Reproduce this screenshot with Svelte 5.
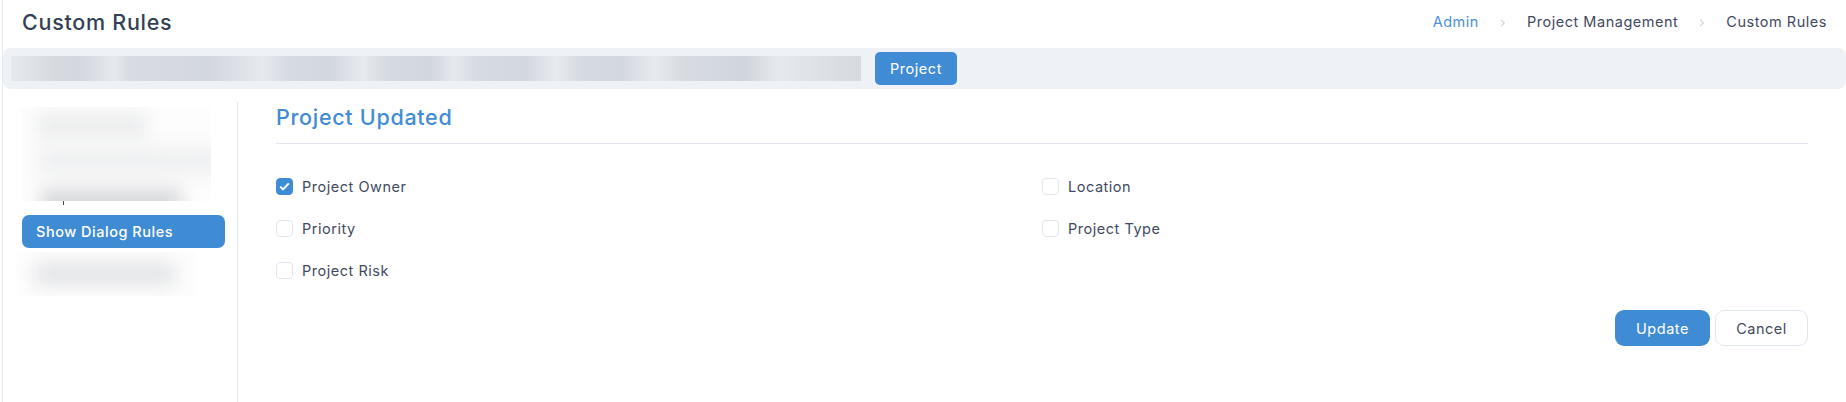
<script>
  let left = [
    { label: 'Project Owner', checked: true },
    { label: 'Priority', checked: false },
    { label: 'Project Risk', checked: false }
  ];
  let right = [
    { label: 'Location', checked: false },
    { label: 'Project Type', checked: false }
  ];
</script>

{#snippet option(item)}
  <label class="option">
    <span class="box" class:checked={item.checked}>
      {#if item.checked}
        <svg width="11" height="9" viewBox="0 0 11 9" fill="none">
          <path d="M1.2 4.6 4 7.4 9.8 1.4" stroke="#fff" stroke-width="2"/>
        </svg>
      {/if}
    </span>
    {item.label}
  </label>
{/snippet}

<div class="page">
  <header class="top">
    <h1>Custom Rules</h1>
    <nav class="crumbs">
      <a href="#admin">Admin</a>
      <svg class="chev" width="6" height="8" viewBox="0 0 6 8" fill="none"><path d="M1 .8 4.4 4 1 7.2" stroke="#b4bfd0"/></svg>
      <span>Project Management</span>
      <svg class="chev" width="6" height="8" viewBox="0 0 6 8" fill="none"><path d="M1 .8 4.4 4 1 7.2" stroke="#b4bfd0"/></svg>
      <span>Custom Rules</span>
    </nav>
  </header>

  <div class="bar">
    <div class="strip"></div>
    <button class="primary project">Project</button>
  </div>

  <div class="body">
    <aside class="side">
      <div class="smudge side-a">
        <i class="line a1"></i>
        <i class="line a2"></i>
        <i class="line a3"></i>
      </div>
      <span class="tick"></span>
      <button class="primary dialog">Show Dialog Rules</button>
      <div class="smudge side-b">
        <i class="line b1"></i>
      </div>
    </aside>

    <main class="content">
      <h2>Project Updated</h2>
      <div class="options">
        <div class="col">
          {#each left as item}
            {@render option(item)}
          {/each}
        </div>
        <div class="col">
          {#each right as item}
            {@render option(item)}
          {/each}
        </div>
      </div>
      <div class="actions">
        <button class="primary update">Update</button>
        <button class="cancel">Cancel</button>
      </div>
    </main>
  </div>
</div>

<style>
  :global(body) {
    margin: 0;
    background: #fff;
  }

  .page {
    height: 402px;
    box-sizing: border-box;
    overflow: hidden;
    margin-left: 2px;
    border-left: 1px solid #e4eaf3;
    font-family: Inter, "Liberation Sans", sans-serif;
    font-size: 14.5px;
    color: #3f4a5f;
    letter-spacing: 0.52px;
  }

  .top {
    display: flex;
    justify-content: space-between;
    align-items: center;
    height: 48px;
    padding: 0 19px 4px 19px;
    box-sizing: border-box;
  }

  h1 {
    margin: 0;
    font-size: 21.5px;
    font-weight: 500;
    color: #333f54;
    letter-spacing: 0.72px;
  }

  .crumbs {
    display: flex;
    align-items: center;
    gap: 21px;
    margin-top: -2px;
  }

  .crumbs a {
    color: #4a8fd8;
    text-decoration: none;
  }

  .chev {
    margin-top: 3px;
  }

  .bar {
    display: flex;
    align-items: center;
    gap: 14px;
    height: 41px;
    padding-left: 8px;
    background: #eef1f6;
    border-radius: 8px;
  }

  .strip {
    width: 850px;
    height: 25px;
    background: linear-gradient(90deg,
      #e6e9ee 0, #d6dae0 45px, #d3d7de 70px, #e6e9ee 103px,
      #d8dce2 118px, #d3d7de 200px, #e6e9ee 253px,
      #d6dae1 277px, #d3d7de 320px, #e7eaef 352px,
      #d6dae1 375px, #d2d6dd 420px, #e6e9ee 443px,
      #d6dae1 466px, #d3d7de 514px, #e7eaef 545px,
      #d6dae1 570px, #d3d7de 610px, #e7eaef 644px,
      #d8dce2 671px, #d0d5dc 735px, #e6e9ee 766px,
      #dde0e5 810px, #d6dae0 850px);
  }

  .primary {
    background: #3f8cd4;
    color: #fff;
    border: 0;
    font: inherit;
    letter-spacing: inherit;
  }

  .project {
    width: 82px;
    height: 33px;
    padding: 0;
    border-radius: 5px;
  }

  .body {
    display: flex;
    height: 313px;
  }

  .side {
    position: relative;
    flex-shrink: 0;
    box-sizing: border-box;
    width: 235px;
    margin-top: 13px;
    padding: 5px 0 0 18px;
    border-right: 1px solid #e4e8ef;
  }

  .smudge {
    position: relative;
    overflow: hidden;
  }

  .line {
    position: absolute;
    filter: blur(9px);
  }

  .side-a {
    width: 190px;
    height: 94px;
    background: #fdfdfd;
  }

  .a1 {
    left: 16px;
    top: 6px;
    width: 110px;
    height: 26px;
    background: #ecedee;
  }

  .a2 {
    left: 16px;
    top: 40px;
    width: 190px;
    height: 28px;
    background: #eff0f1;
  }

  .a3 {
    left: 20px;
    top: 82px;
    width: 140px;
    height: 24px;
    background: #d6d7db;
  }

  .tick {
    position: absolute;
    left: 60px;
    top: 99px;
    width: 1px;
    height: 4px;
    background: #3f4a5f;
  }

  .dialog {
    display: block;
    box-sizing: border-box;
    width: 203px;
    height: 33px;
    margin: 14px 0 4px 1px;
    padding: 0 0 0 14px;
    border-radius: 7px;
    text-align: left;
    font-weight: 500;
  }

  .side-b {
    width: 179px;
    height: 44px;
    margin-left: -4px;
    background: #fdfdfd;
  }

  .b1 {
    left: 18px;
    top: 10px;
    width: 140px;
    height: 24px;
    background: #e4e5e7;
  }

  .content {
    flex: 1;
    min-width: 0;
    padding: 0 38px;
    margin-top: 13px;
  }

  h2 {
    margin: 0;
    height: 42px;
    padding-top: 2px;
    box-sizing: border-box;
    border-bottom: 1px solid #e2e7ef;
    font-size: 21.5px;
    font-weight: 500;
    color: #3f8cd4;
    letter-spacing: 0.7px;
  }

  .options {
    display: flex;
    margin-top: 30px;
  }

  .col {
    display: flex;
    flex-direction: column;
    gap: 18px;
    width: 785px;
  }

  .option {
    display: flex;
    align-items: center;
    gap: 9px;
    height: 24px;
  }

  .box {
    display: flex;
    align-items: center;
    justify-content: center;
    width: 17px;
    height: 17px;
    box-sizing: border-box;
    border: 1px solid #e0e6ef;
    border-radius: 4px;
    background: #fff;
  }

  .box.checked {
    background: #3f8cd4;
    border-color: #3f8cd4;
  }

  .actions {
    display: flex;
    justify-content: flex-end;
    gap: 5px;
    margin-top: 28px;
  }

  .update,
  .cancel {
    height: 36px;
    padding: 0;
    border-radius: 9px;
  }

  .update {
    width: 95px;
  }

  .cancel {
    width: 93px;
    background: #fff;
    border: 1px solid #e0e6ef;
    font: inherit;
    color: #3f4a5f;
    letter-spacing: inherit;
  }
</style>
